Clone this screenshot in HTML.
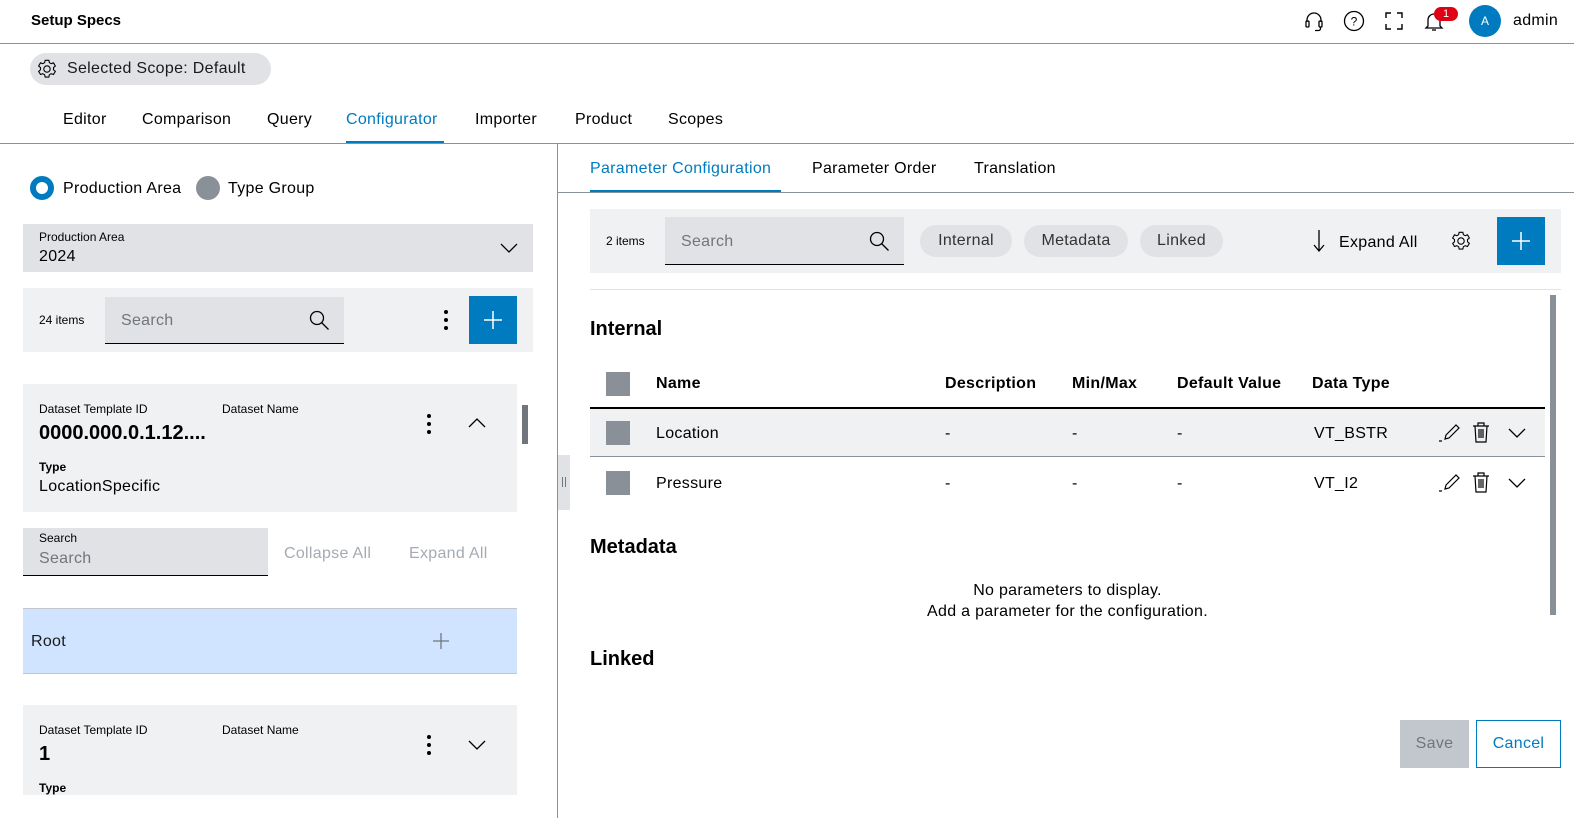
<!DOCTYPE html>
<html><head><meta charset="utf-8"><style>
*{box-sizing:border-box;margin:0;padding:0}
body{width:1574px;height:818px;overflow:hidden;background:#fff;font-family:"Liberation Sans",sans-serif;color:#000;position:relative}
.a{position:absolute}
.t{font-size:16px;white-space:nowrap;letter-spacing:0.3px}
.s{font-size:12px;white-space:nowrap}
.g{background:#eff1f2}
.gd{background:#e0e2e5}
.b{font-weight:bold}
.ic{position:absolute}
</style></head><body>
<!-- header -->
<div class="a b" style="left:31px;top:12px;font-size:15px">Setup Specs</div>
<svg class="ic" style="left:1302px;top:9px" width="24" height="24" viewBox="0 0 24 24" fill="none" stroke="#000" stroke-width="1.3"><path d="M5 13v-2a7 7 0 0 1 14 0v2"/><rect x="4" y="12" width="3" height="6" rx="1"/><rect x="17" y="12" width="3" height="6" rx="1"/><path d="M18.5 18v1.5a2 2 0 0 1-2 2H13"/></svg>
<svg class="ic" style="left:1342px;top:9px" width="24" height="24" viewBox="0 0 24 24" fill="none" stroke="#000" stroke-width="1.3"><circle cx="12" cy="12" r="9.5"/><text x="12" y="16.5" font-size="12" text-anchor="middle" fill="#000" stroke="none" font-family="Liberation Sans">?</text></svg>
<svg class="ic" style="left:1382px;top:9px" width="24" height="24" viewBox="0 0 24 24" fill="none" stroke="#000" stroke-width="1.4"><path d="M4 9V4h5M15 4h5v5M20 15v5h-5M9 20H4v-5"/></svg>
<svg class="ic" style="left:1422px;top:9px" width="24" height="24" viewBox="0 0 24 24" fill="none" stroke="#000" stroke-width="1.3"><path d="M6 17V11a6 6 0 0 1 12 0v6l2 2H4z"/><path d="M10 21h4"/></svg>
<div class="a" style="left:1434px;top:7px;width:24px;height:14px;border-radius:7px;background:#e00015;color:#fff;font-size:11px;text-align:center;line-height:14px">1</div>
<div class="a" style="left:1469px;top:5px;width:32px;height:32px;border-radius:50%;background:#007bc0;color:#fff;font-size:12px;text-align:center;line-height:32px">A</div>
<div class="a t" style="left:1513px;top:12px">admin</div>
<div class="a" style="left:0;top:43px;width:1574px;height:1px;background:#8a9097"></div>
<!-- scope -->
<div class="a" style="left:30px;top:53px;width:241px;height:32px;border-radius:16px;background:#e0e2e5"></div>
<svg class="ic" style="left:36px;top:58px" width="22" height="22" viewBox="0 0 24 24" fill="none" stroke="#000" stroke-width="1.2"><circle cx="12" cy="12" r="3.5"/><path d="M10 2.5h4l.6 2.6 2 1.1 2.5-.9 2 3.4-2 1.8v2.3l2 1.8-2 3.4-2.5-.9-2 1.1-.6 2.6h-4l-.6-2.6-2-1.1-2.5.9-2-3.4 2-1.8v-2.3l-2-1.8 2-3.4 2.5.9 2-1.1z"/></svg>
<div class="a t" style="left:67px;top:60px;color:#1a1a1a">Selected Scope: Default</div>
<!-- tabs -->
<div class="a t" style="left:63px;top:111px">Editor</div>
<div class="a t" style="left:142px;top:111px">Comparison</div>
<div class="a t" style="left:267px;top:111px">Query</div>
<div class="a t" style="left:346px;top:111px;color:#007bc0">Configurator</div>
<div class="a" style="left:346px;top:141px;width:98px;height:3px;background:#007bc0"></div>
<div class="a t" style="left:475px;top:111px">Importer</div>
<div class="a t" style="left:575px;top:111px">Product</div>
<div class="a t" style="left:668px;top:111px">Scopes</div>
<div class="a" style="left:0;top:143px;width:1574px;height:1px;background:#8a9097"></div>
<div class="a" style="left:557px;top:144px;width:1px;height:674px;background:#8a9097"></div>
<!-- left -->
<div class="a" style="left:30px;top:176px;width:24px;height:24px;border-radius:50%;border:6px solid #007bc0;background:#fff"></div>
<div class="a t" style="left:63px;top:180px">Production Area</div>
<div class="a" style="left:196px;top:176px;width:24px;height:24px;border-radius:50%;background:#8a9097"></div>
<div class="a t" style="left:228px;top:180px">Type Group</div>
<div class="a gd" style="left:23px;top:224px;width:510px;height:48px"></div>
<div class="a s" style="left:39px;top:230px">Production Area</div>
<div class="a t" style="left:39px;top:248px">2024</div>
<svg class="ic" style="left:500px;top:242px" width="18" height="12" viewBox="0 0 18 12" fill="none" stroke="#000" stroke-width="1.3"><path d="M1 2l8 8 8-8"/></svg>
<div class="a g" style="left:23px;top:288px;width:510px;height:64px"></div>
<div class="a s" style="left:39px;top:313px">24 items</div>
<div class="a gd" style="left:105px;top:297px;width:239px;height:47px;border-bottom:1px solid #000"></div>
<div class="a t" style="left:121px;top:312px;color:#71767c">Search</div>
<svg class="ic" style="left:308px;top:309px" width="24" height="24" viewBox="0 0 24 24" fill="none" stroke="#000" stroke-width="1.3"><circle cx="9" cy="9" r="6.5"/><path d="M13.5 13.5l7 7"/></svg>
<svg class="ic" style="left:444px;top:310px" width="4" height="20"><circle cx="2" cy="2" r="2"/><circle cx="2" cy="10" r="2"/><circle cx="2" cy="18" r="2"/></svg>
<div class="a" style="left:469px;top:296px;width:48px;height:48px;background:#007bc0"></div>
<svg class="ic" style="left:483px;top:310px" width="20" height="20" stroke="#fff" stroke-width="1.5"><path d="M10 1v18M1 10h18"/></svg>
<div class="a g" style="left:23px;top:384px;width:494px;height:128px"></div>
<div class="a s" style="left:39px;top:402px">Dataset Template ID</div>
<div class="a s" style="left:222px;top:402px">Dataset Name</div>
<div class="a b" style="left:39px;top:422px;font-size:20px">0000.000.0.1.12....</div>
<svg class="ic" style="left:427px;top:414px" width="4" height="20"><circle cx="2" cy="2" r="2"/><circle cx="2" cy="10" r="2"/><circle cx="2" cy="18" r="2"/></svg>
<svg class="ic" style="left:468px;top:417px" width="18" height="11" fill="none" stroke="#000" stroke-width="1.3"><path d="M1 10l8-8 8 8"/></svg>
<div class="a b s" style="left:39px;top:460px">Type</div>
<div class="a t" style="left:39px;top:478px">LocationSpecific</div>
<div class="a" style="left:522px;top:405px;width:6px;height:39px;background:#71767c"></div>
<div class="a gd" style="left:23px;top:528px;width:245px;height:48px;border-bottom:1px solid #000"></div>
<div class="a s" style="left:39px;top:531px">Search</div>
<div class="a t" style="left:39px;top:550px;color:#71767c">Search</div>
<div class="a t" style="left:284px;top:545px;color:#a4abb3">Collapse All</div>
<div class="a t" style="left:409px;top:545px;color:#a4abb3">Expand All</div>
<div class="a" style="left:23px;top:608px;width:494px;height:66px;background:#d1e4ff;border-top:1px solid #c1c7cc;border-bottom:1px solid #c1c7cc"></div>
<div class="a t" style="left:31px;top:633px;color:#1a1a1a">Root</div>
<svg class="ic" style="left:431px;top:631px" width="20" height="20" stroke="#71767c" stroke-width="1.3"><path d="M10 2v16M2 10h16"/></svg>
<div class="a g" style="left:23px;top:705px;width:494px;height:90px"></div>
<div class="a s" style="left:39px;top:723px">Dataset Template ID</div>
<div class="a s" style="left:222px;top:723px">Dataset Name</div>
<div class="a b" style="left:39px;top:743px;font-size:20px">1</div>
<svg class="ic" style="left:427px;top:735px" width="4" height="20"><circle cx="2" cy="2" r="2"/><circle cx="2" cy="10" r="2"/><circle cx="2" cy="18" r="2"/></svg>
<svg class="ic" style="left:468px;top:740px" width="18" height="11" fill="none" stroke="#000" stroke-width="1.3"><path d="M1 1l8 8 8-8"/></svg>
<div class="a b s" style="left:39px;top:781px">Type</div>
<div class="a" style="left:558px;top:455px;width:12px;height:55px;background:#e0e2e5"></div>
<div class="a" style="left:562px;top:477px;width:1px;height:10px;background:#71767c"></div>
<div class="a" style="left:565px;top:477px;width:1px;height:10px;background:#71767c"></div>
<!-- right -->
<div class="a t" style="left:590px;top:160px;color:#007bc0">Parameter Configuration</div>
<div class="a" style="left:590px;top:190px;width:191px;height:3px;background:#007bc0"></div>
<div class="a t" style="left:812px;top:160px">Parameter Order</div>
<div class="a t" style="left:974px;top:160px">Translation</div>
<div class="a" style="left:558px;top:192px;width:1016px;height:1px;background:#8a9097"></div>
<div class="a g" style="left:590px;top:209px;width:971px;height:64px"></div>
<div class="a s" style="left:606px;top:234px">2 items</div>
<div class="a gd" style="left:665px;top:217px;width:239px;height:48px;border-bottom:1px solid #000"></div>
<div class="a t" style="left:681px;top:233px;color:#71767c">Search</div>
<svg class="ic" style="left:868px;top:230px" width="24" height="24" viewBox="0 0 24 24" fill="none" stroke="#000" stroke-width="1.3"><circle cx="9" cy="9" r="6.5"/><path d="M13.5 13.5l7 7"/></svg>
<div class="a gd t" style="left:920px;top:225px;width:92px;height:32px;border-radius:16px;line-height:32px;text-align:center;color:#333">Internal</div>
<div class="a gd t" style="left:1024px;top:225px;width:104px;height:32px;border-radius:16px;line-height:32px;text-align:center;color:#333">Metadata</div>
<div class="a gd t" style="left:1140px;top:225px;width:83px;height:32px;border-radius:16px;line-height:32px;text-align:center;color:#333">Linked</div>
<svg class="ic" style="left:1312px;top:229px" width="14" height="24" fill="none" stroke="#000" stroke-width="1.3"><path d="M7 1v20M2 16l5 6 5-6"/></svg>
<div class="a t" style="left:1339px;top:234px">Expand All</div>
<svg class="ic" style="left:1450px;top:230px" width="22" height="22" viewBox="0 0 24 24" fill="none" stroke="#000" stroke-width="1.2"><circle cx="12" cy="12" r="3.5"/><path d="M10 2.5h4l.6 2.6 2 1.1 2.5-.9 2 3.4-2 1.8v2.3l2 1.8-2 3.4-2.5-.9-2 1.1-.6 2.6h-4l-.6-2.6-2-1.1-2.5.9-2-3.4 2-1.8v-2.3l-2-1.8 2-3.4 2.5.9 2-1.1z"/></svg>
<div class="a" style="left:1497px;top:217px;width:48px;height:48px;background:#007bc0"></div>
<svg class="ic" style="left:1511px;top:231px" width="20" height="20" stroke="#fff" stroke-width="1.5"><path d="M10 1v18M1 10h18"/></svg>
<div class="a" style="left:590px;top:289px;width:971px;height:1px;background:#e0e2e5"></div>
<div class="a" style="left:1550px;top:295px;width:6px;height:320px;background:#8a9097"></div>
<div class="a b" style="left:590px;top:318px;font-size:20px">Internal</div>
<div class="a" style="left:606px;top:372px;width:24px;height:24px;background:#8a9097"></div>
<div class="a b t" style="left:656px;top:375px">Name</div>
<div class="a b t" style="left:945px;top:375px">Description</div>
<div class="a b t" style="left:1072px;top:375px">Min/Max</div>
<div class="a b t" style="left:1177px;top:375px">Default Value</div>
<div class="a b t" style="left:1312px;top:375px">Data Type</div>
<div class="a" style="left:590px;top:407px;width:955px;height:2px;background:#000"></div>
<div class="a g" style="left:590px;top:409px;width:955px;height:48px;border-bottom:1px solid #8a9097"></div>
<div class="a" style="left:606px;top:421px;width:24px;height:24px;background:#8a9097"></div>
<div class="a t" style="left:656px;top:425px">Location</div>
<div class="a t" style="left:945px;top:425px">-</div>
<div class="a t" style="left:1072px;top:425px">-</div>
<div class="a t" style="left:1177px;top:425px">-</div>
<div class="a t" style="left:1314px;top:425px">VT_BSTR</div>
<div class="a" style="left:606px;top:471px;width:24px;height:24px;background:#8a9097"></div>
<div class="a t" style="left:656px;top:475px">Pressure</div>
<div class="a t" style="left:945px;top:475px">-</div>
<div class="a t" style="left:1072px;top:475px">-</div>
<div class="a t" style="left:1177px;top:475px">-</div>
<div class="a t" style="left:1314px;top:475px">VT_I2</div>
<svg class="ic" style="left:1438px;top:422px" width="24" height="22" viewBox="0 0 24 22" fill="none" stroke="#000" stroke-width="1.2"><path d="M1 19h3M7 17l1-4 10-10 3 3-10 10z"/></svg>
<svg class="ic" style="left:1471px;top:421px" width="20" height="23" viewBox="0 0 20 23" fill="none" stroke="#000" stroke-width="1.2"><path d="M2 5h16M7 5V2h6v3M4 5l1 16h10l1-16M8 8v9M10 8v9M12 8v9"/></svg>
<svg class="ic" style="left:1508px;top:428px" width="18" height="11" fill="none" stroke="#000" stroke-width="1.3"><path d="M1 1l8 8 8-8"/></svg>
<svg class="ic" style="left:1438px;top:472px" width="24" height="22" viewBox="0 0 24 22" fill="none" stroke="#000" stroke-width="1.2"><path d="M1 19h3M7 17l1-4 10-10 3 3-10 10z"/></svg>
<svg class="ic" style="left:1471px;top:471px" width="20" height="23" viewBox="0 0 20 23" fill="none" stroke="#000" stroke-width="1.2"><path d="M2 5h16M7 5V2h6v3M4 5l1 16h10l1-16M8 8v9M10 8v9M12 8v9"/></svg>
<svg class="ic" style="left:1508px;top:478px" width="18" height="11" fill="none" stroke="#000" stroke-width="1.3"><path d="M1 1l8 8 8-8"/></svg>
<div class="a b" style="left:590px;top:536px;font-size:20px">Metadata</div>
<div class="a t" style="left:860px;top:580px;width:415px;text-align:center;line-height:21px">No parameters to display.<br>Add a parameter for the configuration.</div>
<div class="a b" style="left:590px;top:648px;font-size:20px">Linked</div>
<div class="a t" style="left:1400px;top:720px;width:69px;height:48px;background:#c1c7cc;color:#71767c;text-align:center;line-height:48px">Save</div>
<div class="a t" style="left:1476px;top:720px;width:85px;height:48px;border:1px solid #007bc0;color:#007bc0;text-align:center;line-height:46px">Cancel</div>
</body></html>
